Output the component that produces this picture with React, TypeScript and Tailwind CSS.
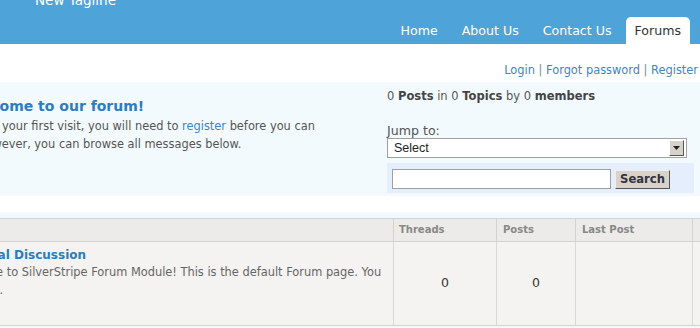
export default function App() {
  const sep = <span className="text-[#7a8a9a]"> | </span>;
  return (
    <div className="w-[700px] h-[328px] overflow-hidden bg-white font-['DejaVu_Sans',Verdana,sans-serif]">
      <div className="h-[44px] bg-[#4ea4d9] flex flex-col">
        <div className="pl-[35px] mt-[-8px] text-[13.5px] leading-[16px] text-white whitespace-nowrap">New Tagline</div>
        <nav className="mt-auto flex justify-end pr-[10px] h-[27px] text-[12.6px] whitespace-nowrap">
          <a className="px-3 pt-[2px] flex items-center text-white">Home</a>
          <a className="px-3 pt-[2px] flex items-center text-white">About Us</a>
          <a className="px-3 pt-[2px] flex items-center text-white">Contact Us</a>
          <a className="ml-[2px] px-[9px] pt-[2px] flex items-center bg-white rounded-t-[5px] text-[#333]">Forums</a>
        </nav>
      </div>

      <div className="ml-[-60px] w-[760px]">
        <div className="pt-[17px] leading-[18px] text-[11.4px] text-right pr-[2px] text-[#3d85c6] whitespace-nowrap">
          <a>Login</a>{sep}<a>Forgot password</a>{sep}<a>Register</a>
        </div>

        <div className="mt-[3px] flex bg-[#f2fafe]">
          <div className="w-[447px] pl-[22px] pt-[15px] whitespace-nowrap">
            <h1 className="text-[14px] leading-[18px] font-bold text-[#2b7cc1]">Welcome to our forum!</h1>
            <div className="mt-[3px] text-[11.4px] leading-[17.6px] text-[#555]">
              <div className="ml-[-8px]">
                If this is your first visit, you will need to <a className="text-[#3d85c6]">register</a> before you can
              </div>
              <div className="ml-[-17px]">post. However, you can browse all messages below.</div>
            </div>
          </div>
          <div className="w-[307px] pt-[6px] pb-[3px]">
            <div className="text-[11.5px] leading-[16px] text-[#555] whitespace-nowrap">
              0 <b className="text-[#444]">Posts</b> in 0 <b className="text-[#444]">Topics</b> by 0 <b className="text-[#444]">members</b>
            </div>
            <div className="mt-[19px] text-[12.6px] leading-[15px] text-[#555]">Jump to:</div>
            <div className="w-[300px] h-[20px] border border-[#a0a0a0] bg-white flex items-center justify-between pl-[6px] pr-[2px]">
              <span className="font-['Liberation_Sans',Arial,sans-serif] text-[12.5px] text-[#222]">Select</span>
              <span className="w-[15px] h-[16px] bg-[#d6d2ca] border-t border-l border-t-white border-l-white border-r border-b border-r-[#555] border-b-[#555] flex items-center justify-center">
                <svg width="7" height="4" viewBox="0 0 7 4"><path d="M0 0h7L3.5 4z" fill="#222" /></svg>
              </span>
            </div>
            <div className="mt-[5px] h-[30px] bg-[#e5eefc] flex items-start pl-[5px] pt-[6px] gap-[4px]">
              <div className="w-[219px] h-[20px] border border-[#a0a0a0] bg-white" />
              <button className="mt-[1px] w-[55px] h-[19px] bg-[#d8d2c8] border border-t-[#eee] border-l-[#eee] border-r-[#555] border-b-[#555] text-[11.6px] font-bold text-[#334] leading-[15px] flex items-center justify-center">
                Search
              </button>
            </div>
          </div>
        </div>

        <div className="mt-[16px] bg-[#f2fafe] pt-[6px] h-[120px]">
          <div className="grid grid-cols-[453px_103px_79px_118px] h-[23px] bg-[#ecebe9] border-t border-[#d2d2d2] text-[10px] font-bold text-[#888] leading-[22px]">
            <div />
            <div className="border-l border-[#d2d2d2] pl-[5px]">Threads</div>
            <div className="border-l border-[#d2d2d2] pl-[6px]">Posts</div>
            <div className="border-l border-r border-[#d2d2d2] pl-[6px]">Last Post</div>
          </div>
          <div className="grid grid-cols-[453px_103px_79px_118px] h-[85px] bg-[#f4f3f1] border-t border-b border-[#d2d2d2]">
            <div className="pl-[17px] pt-[5px] whitespace-nowrap">
              <div className="text-[12px] leading-[16px] font-bold text-[#2b7cc1]">General Discussion</div>
              <div className="text-[11.4px] leading-[18px] text-[#666]">
                <div className="ml-[-6px]">Welcome to SilverStripe Forum Module! This is the default Forum page. You</div>
                <div className="ml-[-1px]">content.</div>
              </div>
            </div>
            <div className="border-l border-[#d8d8d8] flex items-center justify-center text-[12.5px] text-[#333]">0</div>
            <div className="border-l border-[#d8d8d8] flex items-center justify-center text-[12.5px] text-[#333]">0</div>
            <div className="border-l border-r border-[#d8d8d8]" />
          </div>
        </div>
      </div>
    </div>
  );
}
